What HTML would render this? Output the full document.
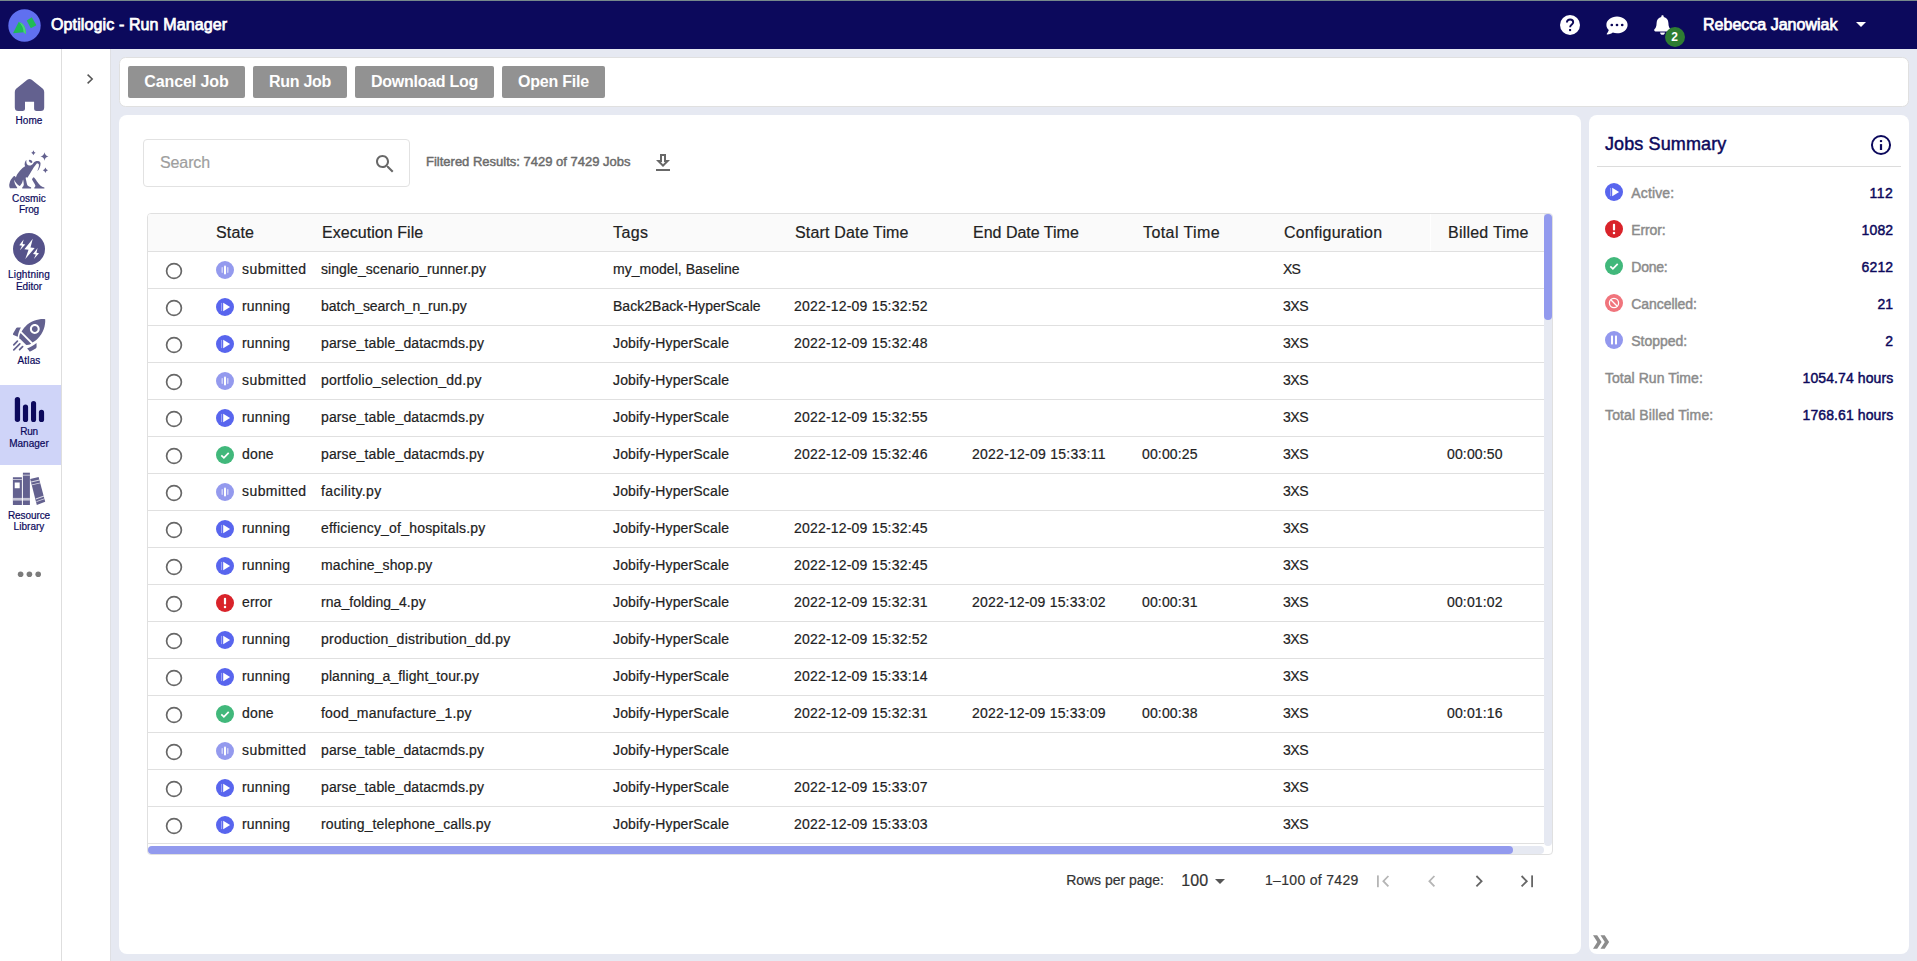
<!DOCTYPE html><html lang='en'><head><meta charset='utf-8'><title>Optilogic - Run Manager</title><style>
*{box-sizing:border-box}
html,body{margin:0;padding:0}
body{width:1917px;height:961px;overflow:hidden;background:#e6e9f2;font-family:"Liberation Sans",Arial,sans-serif;position:relative;color:#222}
.a{position:absolute}
.t{position:absolute;white-space:pre;line-height:1;}
.card{position:absolute;background:#fff;border-radius:8px}
.btn{position:absolute;top:66px;height:32px;background:#929292;border-radius:2px}
.rowline{position:absolute;left:148px;width:1396px;height:1px;background:#e0e0e0}
svg{position:absolute;overflow:visible}
</style></head><body><header><div class='a' style='left:0;top:0;width:1917px;height:48.7px;background:#0c095c'></div><div class='a' style='left:0;top:0;width:1917px;height:1px;background:#76898b'></div><svg style="left:8px;top:8.5px" width="33" height="33" viewBox="0 0 33 33"><circle cx="16.5" cy="16.5" r="16.2" fill="#6070f0"/>
<path d="M5 24.300 L10.800 12.800 Q18.600 15.500 17.800 25.300 L15.600 23.200 Z" fill="#1fbb55"/><path d="M10.800 12.800 Q18.600 15.500 17.800 25.300 L15.600 23.200 Q15.400 17.500 10.800 12.800 Z" fill="#49d37a"/>
<path d="M18.700 11.400 L23.800 8.300 L28.400 16.300 L22.800 19.300 Z" fill="#1fbb55"/></svg><span class='t' style='left:51.00px;top:16.68px;font-size:16px;color:#fff;letter-spacing:0.121px;-webkit-text-stroke:0.75px currentColor;'>Optilogic - Run Manager</span><svg style="left:1560px;top:15px" width="20" height="20" viewBox="0 0 20 20"><circle cx="10" cy="10" r="10" fill="#fff"/>
<path d="M6.9 7.6 C6.9 5.6 8.3 4.5 10.1 4.5 C11.9 4.5 13.2 5.6 13.2 7.2 C13.2 9.4 10.1 9.6 10.1 12.3" fill="none" stroke="#0c0858" stroke-width="1.9" stroke-linecap="butt"/><rect x="9.1" y="14" width="2" height="2.1" fill="#0c0858"/></svg><svg style="left:1605.5px;top:15.5px" width="22" height="20" viewBox="0 0 22 20"><path d="M11 0.6 C5.1 0.6 0.4 4.3 0.4 8.9 C0.4 10.9 1.3 12.7 2.8 14.1 C2.3 16 0.9 17.7 0.8 17.8 C0.7 17.9 0.7 18.1 0.8 18.2 C0.8 18.4 1 18.5 1.2 18.5 C3.8 18.5 5.8 17.3 6.8 16.5 C8.1 17 9.5 17.2 11 17.2 C16.9 17.2 21.6 13.5 21.6 8.9 C21.6 4.3 16.9 0.6 11 0.6 Z" fill="#fff"/>
<circle cx="5.8" cy="9" r="1.35" fill="#0c0858"/><circle cx="11" cy="9" r="1.35" fill="#0c0858"/><circle cx="16.2" cy="9" r="1.35" fill="#0c0858"/></svg><svg style="left:1653.5px;top:15px" width="17" height="20" viewBox="0 0 17 20"><path d="M8.5 0.2 C7.8 0.2 7.3 0.8 7.3 1.4 L7.3 2.1 C4.6 2.7 2.6 5 2.6 7.9 C2.6 11.6 1.6 13 0.6 14.1 C0.3 14.4 0.2 14.8 0.2 15.1 C0.2 15.8 0.7 16.4 1.4 16.4 L15.6 16.4 C16.3 16.4 16.8 15.8 16.8 15.1 C16.8 14.8 16.7 14.4 16.4 14.1 C15.4 13 14.4 11.6 14.4 7.9 C14.4 5 12.4 2.7 9.7 2.1 L9.7 1.4 C9.7 0.8 9.2 0.2 8.5 0.2 Z M8.5 19.8 C9.8 19.8 10.9 18.7 10.9 17.4 L6.1 17.4 C6.1 18.7 7.2 19.8 8.5 19.8 Z" fill="#fff"/></svg><div class='a' style='left:1665px;top:27px;width:20px;height:20px;border-radius:10px;background:#2e7d32'></div><span class='t' style='left:1671.30px;top:30.66px;font-size:12px;color:#fff;letter-spacing:0.513px;font-weight:700;'>2</span><span class='t' style='left:1703.00px;top:16.68px;font-size:16px;color:#fff;letter-spacing:0.008px;-webkit-text-stroke:0.75px currentColor;'>Rebecca Janowiak</span><svg style="left:1856px;top:22px" width="10" height="5" viewBox="0 0 10 5"><path d="M0 0 L10 0 L5 5 Z" fill="#fff"/></svg></header><nav><div class='a' style='left:0;top:48.7px;width:61px;height:913px;background:#fff'></div><div class='a' style='left:61px;top:48.7px;width:1px;height:913px;background:#dedede'></div><div class='a' style='left:62px;top:48.7px;width:48px;height:913px;background:#fff'></div><div class='a' style='left:110px;top:48.7px;width:1px;height:913px;background:#dfe0e4'></div><div class='a' style='left:0;top:385px;width:61px;height:79.7px;background:#cfd4f8'></div><svg style="left:86px;top:73px" width="8" height="12" viewBox="0 0 8 12"><path d="M1.6 1.6 L6.2 6 L1.6 10.4" fill="none" stroke="#555" stroke-width="1.5"/></svg><svg style="left:14px;top:78px" width="31" height="34" viewBox="0 0 31 34"><path d="M13.3 1.8 Q15.5 0.1 17.7 1.8 L28.6 10.6 Q30.2 11.9 30.2 14 L30.2 29.5 Q30.2 33 26.7 33 L22.6 33 Q20.1 33 20.1 30.5 L20.1 23.8 L11 23.8 L11 30.5 Q11 33 8.5 33 L4.3 33 Q0.8 33 0.8 29.5 L0.8 14 Q0.8 11.9 2.4 10.6 Z" fill="#63618f"/></svg><span class='t' style='left:15.58px;top:116.45px;font-size:10px;color:#0c095c;letter-spacing:0.039px;-webkit-text-stroke:0.2px currentColor;'>Home</span><svg style="left:0px;top:140px" width="60" height="60" viewBox="0 0 60 60"><g fill="#63618f">
<path d="M10 48.3 C9 46.5 9.1 44.5 9.5 43.5 C10 41 11.5 38.5 12.8 37.3 C13.5 36.5 14 36 14.5 36 C15 36.1 15.5 36.7 15.9 37.4 C16.5 35.8 17 34.8 17.4 34.1 C18.2 32.6 19.2 31.4 20.1 30.4 C21.6 28.8 23.4 27.4 25.1 26.3 C24.6 25.4 24.5 24.4 24.7 23.6 C24.8 22.6 25 21.9 25.4 21.3 C25.7 20.8 26 20.4 26.5 20 C26.2 21.5 26.3 23 27 24.2 C27.8 25.3 29.2 25.7 30.6 25.5 C31.8 25.3 32.8 24.4 33.4 23.1 C34 22.3 34.6 21.8 35.2 21.5 C36.1 21.1 37.1 21 38 21.05 C38.8 21.1 39.6 21.4 40 22 C40.5 22.6 40.7 23.3 40.5 24 C40.5 25.2 40.2 26.3 39.8 27.2 C39.4 28.3 38.9 29.3 38.4 30 C38.1 30.5 37.7 30.8 37.3 30.9 C38 29.4 38.7 27.8 38.9 26.3 C39 25.4 38.9 24.6 38.7 24 C38.2 23.5 37.6 23.3 37 23.3 C35.4 25 33.8 27.3 32.5 29.5 C31.2 31.6 29.8 33.8 28.8 35.5 C28.3 36.4 27.8 37.2 27.4 37.8 L26.5 37.3 L25.6 37.8 C25.8 39 26 40 26.3 41 C26.6 42.6 26.9 44.2 27.4 45.3 C28.4 46.4 29.8 46.9 31.1 47.3 L31.1 48.4 L22.2 48.4 L22.2 47.5 C23.1 46.8 23.7 45.8 23.8 44.6 C23.7 43 23.4 41.2 23.1 39.6 C22.8 40.6 22.6 41.3 22.4 41.9 C22 43 21.5 43.9 21 44.6 C20.6 45.3 20.3 45.7 19.9 45.9 C19.1 45.800 18.4 45.300 17.800 44.7 C17.1 44.1 16.500 43.4 16 42.8 C15.4 42 14.800 40.9 14.2 39.7 C14.2 41.3 14.700 43.100 15.300 44.6 C15.800 45.8 16.400 46.8 17.200 47.4 L17.200 48.3 Z"/>
<path d="M33.4 37.3 C32.8 38 32.3 38.8 32 39.6 C33 41.2 34 42.8 34.8 44.2 C35.2 44.9 35.4 45.4 35.4 46 C35.2 46.7 34.8 47.2 34.3 47.6 L34.3 48.4 L44.4 48.4 L44.4 47.4 C42.8 47.1 41.4 46.5 40.3 45.5 C39 44.2 38 42.8 37 41.4 C36 40 35 38.7 34.3 37.8 C34 37.5 33.7 37.3 33.4 37.3 Z"/>
<ellipse cx="30.6" cy="21.3" rx="2.05" ry="1.2" transform="rotate(38 30.6 21.3)"/>
<path d="M33.4 10.3 Q33.84 12.30 35.6 12.8 Q33.84 13.30 33.4 15.3 Q32.96 13.30 31.2 12.8 Q32.96 12.30 33.4 10.3 Z"/>
<path d="M44.5 12.3 Q45.06 15.91 48.5 16.5 Q45.06 17.09 44.5 20.7 Q43.94 17.09 40.5 16.5 Q43.94 15.91 44.5 12.3 Z"/>
<path d="M45.4 27.6 Q45.92 29.76 48.0 30.3 Q45.92 30.84 45.4 33.0 Q44.88 30.84 42.8 30.3 Q44.88 29.76 45.4 27.6 Z"/>
</g></svg><span class='t' style='left:12.09px;top:194.35px;font-size:10px;color:#0c095c;letter-spacing:0.081px;-webkit-text-stroke:0.2px currentColor;'>Cosmic</span><span class='t' style='left:18.93px;top:205.35px;font-size:10px;color:#0c095c;letter-spacing:-0.105px;-webkit-text-stroke:0.2px currentColor;'>Frog</span><svg style="left:13px;top:233px" width="32" height="32" viewBox="0 0 32 32"><circle cx="16" cy="16" r="16" fill="#55528a"/>
<g fill="#fff"><path d="M19.8 5.8 L11.4 16.3 L15.5 16.8 L12.3 26 L21.7 15 L17.5 14.5 Z"/>
<path d="M10.6 6.4 L6.3 12.3 L9 12.7 L6.9 17.3 L12.3 11.5 L9.6 11.1 Z"/>
<path d="M24.6 15 L20 21 L22.8 21.4 L20.9 25.9 L26 20.2 L23.5 19.8 Z"/></g></svg><span class='t' style='left:8.07px;top:270.35px;font-size:10px;color:#0c095c;letter-spacing:0.141px;-webkit-text-stroke:0.2px currentColor;'>Lightning</span><span class='t' style='left:15.91px;top:281.75px;font-size:10px;color:#0c095c;letter-spacing:0.008px;-webkit-text-stroke:0.2px currentColor;'>Editor</span><svg style="left:0px;top:305px" width="60" height="50" viewBox="0 0 60 50"><g fill="#63618f">
<path d="M45.2 14.2 C39.4 13.6 31 15.6 25.4 21.4 C23.6 23.2 22.4 25 21.6 26.4 L32.6 37.6 C34 36.8 35.8 35.6 37.6 33.8 C43.4 28 45.6 20.4 45.2 14.2 Z M34.8 19.1 C37.500 19.1 39.700 21.300 39.700 24 C39.700 26.700 37.500 28.900 34.8 28.900 C32.100 28.900 29.900 26.700 29.900 24 C29.900 21.300 32.100 19.1 34.8 19.1 Z M34.8 21.100 C33.200 21.100 31.900 22.400 31.900 24 C31.900 25.600 33.200 26.900 34.8 26.900 C36.400 26.900 37.700 25.600 37.700 24 C37.700 22.400 36.400 21.100 34.8 21.100 Z" fill-rule="evenodd"/>
<path d="M20.6 28 C19.2 30 19 32.2 19.4 33.2 L26 39.8 C27 40.2 29.2 40 31.2 38.8 Z"/>
<path d="M16.300 23.100 Q16.700 22.600 17.400 22.600 L20.900 22.500 C19.400 25 18.200 28.500 17.700 31.800 L13.500 29.900 Q12.600 29.400 13.100 28.400 Z"/>
<path d="M36.500 37.900 L36.600 41.800 C36.600 42.500 36.300 43.100 35.700 43.500 L30.800 46.300 C29.900 46.700 29.100 46.200 28.900 45.400 L27.100 43.400 C30 42.400 33.600 40.300 36.500 37.900 Z"/>
</g><g stroke="#63618f" stroke-width="1.7" stroke-linecap="round"><path d="M17.4 36.2 L13.8 39.8"/><path d="M19.8 38.8 L13.8 44.8"/><path d="M22.6 41.6 L19.6 44.6"/></g></svg><span class='t' style='left:17.52px;top:356.35px;font-size:10px;color:#0c095c;letter-spacing:0.147px;-webkit-text-stroke:0.2px currentColor;'>Atlas</span><svg style="left:0px;top:385px" width="60" height="40" viewBox="0 0 60 40"><g fill="#0c095c">
<rect x="14.8" y="11.9" width="5.3" height="25.1" rx="2.65"/><rect x="22.9" y="19.5" width="5.2" height="17.5" rx="2.6"/><rect x="31" y="15.9" width="5.1" height="21.1" rx="2.55"/><rect x="38.9" y="24.8" width="5.2" height="12.2" rx="2.6"/></g></svg><span class='t' style='left:20.29px;top:427.35px;font-size:10px;color:#0c095c;letter-spacing:-0.312px;-webkit-text-stroke:0.2px currentColor;'>Run</span><span class='t' style='left:9.17px;top:438.75px;font-size:10px;color:#0c095c;letter-spacing:0.027px;-webkit-text-stroke:0.2px currentColor;'>Manager</span><svg style="left:0px;top:465px" width="60" height="45" viewBox="0 0 60 45"><g fill="#63618f">
<path d="M12.9 12.2 H21.9 V40 H12.9 Z M14.7 17.5 H19.7 V23.2 H14.7 Z" fill-rule="evenodd"/>
<rect x="22.9" y="7.7" width="7" height="32.3"/>
<path d="M30.2 14 L38.6 12 L45.2 36.8 L36.8 40 Z"/></g>
<g fill="#fff" opacity="0.75"><rect x="12.9" y="32.9" width="17" height="2.7" opacity="0.85"/><rect x="22.9" y="9.7" width="7" height="0.9"/><rect x="12.9" y="14" width="9" height="0.8"/>
<path d="M31 16.6 L39.4 14.6 L39.7 15.6 L31.3 17.6 Z"/><path d="M31.8 19.4 L40.2 17.4 L40.4 18.2 L32 20.2 Z"/><path d="M35.6 33.6 L44 30.6 L44.3 31.6 L35.9 34.6 Z"/><path d="M36.3 36.2 L44.7 33.2 L44.9 34 L36.5 37 Z"/></g></svg><span class='t' style='left:7.97px;top:510.55px;font-size:10px;color:#0c095c;letter-spacing:-0.094px;-webkit-text-stroke:0.2px currentColor;'>Resource</span><span class='t' style='left:13.58px;top:521.95px;font-size:10px;color:#0c095c;letter-spacing:0.038px;-webkit-text-stroke:0.2px currentColor;'>Library</span><svg style="left:0px;top:565px" width="60" height="20" viewBox="0 0 60 20"><g fill="#7b7b7b"><circle cx="20.6" cy="9.3" r="2.8"/><circle cx="29.4" cy="9.3" r="2.8"/><circle cx="38.2" cy="9.3" r="2.8"/></g></svg></nav><main><div class='card' style='left:119px;top:57px;width:1790px;height:50px;border:1px solid #e0e0e0;border-radius:6.5px'></div><div class='btn' style='left:128px;width:117px'></div><span class='t' style='left:144.34px;top:74.28px;font-size:16px;color:#fff;letter-spacing:-0.104px;font-weight:700;'>Cancel Job</span><div class='btn' style='left:253px;width:94px'></div><span class='t' style='left:269.05px;top:74.28px;font-size:16px;color:#fff;letter-spacing:-0.301px;font-weight:700;'>Run Job</span><div class='btn' style='left:355px;width:139px'></div><span class='t' style='left:370.92px;top:74.28px;font-size:16px;color:#fff;letter-spacing:-0.254px;font-weight:700;'>Download Log</span><div class='btn' style='left:502px;width:103px'></div><span class='t' style='left:518.01px;top:74.28px;font-size:16px;color:#fff;letter-spacing:-0.215px;font-weight:700;'>Open File</span><div class='card' style='left:118.8px;top:114.7px;width:1462.2px;height:839.1px'></div><div class='a' style='left:143px;top:139.2px;width:267px;height:47.4px;border:1px solid #e2e2e2;border-radius:4px;background:#fff'></div><span class='t' style='left:160.00px;top:154.58px;font-size:16px;color:#9e9e9e;letter-spacing:-0.108px;-webkit-text-stroke:0.2px currentColor;'>Search</span><svg style="left:373px;top:151.700px" width="24" height="24" viewBox="0 0 24 24"><path d="M15.5 14h-.79l-.28-.27C15.41 12.59 16 11.11 16 9.5 16 5.91 13.09 3 9.5 3S3 5.91 3 9.5 5.91 16 9.5 16c1.610 0 3.090-.59 4.230-1.570l.27.28v.79l5 4.990L20.490 19l-4.990-5zm-6 0C7.010 14 5 11.990 5 9.500S7.010 5 9.500 5 14 7.010 14 9.500 11.990 14 9.500 14z" fill="#686868"/></svg><span class='t' style='left:426.00px;top:154.91px;font-size:13px;color:#6b6b6b;letter-spacing:-0.000px;-webkit-text-stroke:0.45px currentColor;'>Filtered Results: 7429 of 7429 Jobs</span><svg style="left:650.900px;top:150.900px" width="24" height="24" viewBox="0 0 24 24"><path d="M19 9h-4V3H9v6H5l7 7 7-7z M11 5h2v6h1.170L12 13.170 9.830 11H11V5z M5 18v2h14v-2H5z" fill="#686868" fill-rule="evenodd"/></svg><div class='a' style='left:147px;top:213px;width:1406px;height:642px;border:1px solid #e0e0e0;border-radius:4px;background:#fff'></div><div class='a' style='left:148px;top:214px;width:1396px;height:37px;background:#fafafa;border-top-left-radius:3px'></div><div class='a' style='left:1430px;top:214px;width:1px;height:38px;background:#fff'></div><div class='rowline' style='top:251px'></div><span class='t' style='left:216.00px;top:224.78px;font-size:16px;color:#222;letter-spacing:0.139px;-webkit-text-stroke:0.2px currentColor;'>State</span><span class='t' style='left:322.00px;top:224.78px;font-size:16px;color:#222;letter-spacing:0.053px;-webkit-text-stroke:0.2px currentColor;'>Execution File</span><span class='t' style='left:613.00px;top:224.78px;font-size:16px;color:#222;letter-spacing:0.383px;-webkit-text-stroke:0.2px currentColor;'>Tags</span><span class='t' style='left:795.00px;top:224.78px;font-size:16px;color:#222;letter-spacing:0.169px;-webkit-text-stroke:0.2px currentColor;'>Start Date Time</span><span class='t' style='left:973.00px;top:224.78px;font-size:16px;color:#222;letter-spacing:-0.003px;-webkit-text-stroke:0.2px currentColor;'>End Date Time</span><span class='t' style='left:1143.00px;top:224.78px;font-size:16px;color:#222;letter-spacing:0.422px;-webkit-text-stroke:0.2px currentColor;'>Total Time</span><span class='t' style='left:1284.00px;top:224.78px;font-size:16px;color:#222;letter-spacing:0.240px;-webkit-text-stroke:0.2px currentColor;'>Configuration</span><span class='t' style='left:1448.00px;top:224.78px;font-size:16px;color:#222;letter-spacing:0.227px;-webkit-text-stroke:0.2px currentColor;'>Billed Time</span><div class='rowline' style='top:288px'></div><svg style="left:165px;top:261.7px" width="18" height="18" viewBox="0 0 18 18"><circle cx="9" cy="9" r="7.400" fill="none" stroke="#676767" stroke-width="1.700"/></svg><svg style="left:216px;top:261px" width="18" height="18" viewBox="0 0 18 18"><circle cx="9" cy="9" r="9" fill="#949aee"/><rect x="8" y="4.6" width="2" height="8.8" rx="1" fill="#fff"/><rect x="5.5" y="6" width="1.4" height="6" rx="0.7" fill="#fff" opacity="0.6"/><rect x="11.1" y="6" width="1.4" height="6" rx="0.7" fill="#fff" opacity="0.6"/></svg><span class='t' style='left:242.00px;top:261.87px;font-size:14px;color:#222;letter-spacing:0.432px;-webkit-text-stroke:0.2px currentColor;'>submitted</span><span class='t' style='left:321.00px;top:261.87px;font-size:14px;color:#222;letter-spacing:0.062px;-webkit-text-stroke:0.2px currentColor;'>single_scenario_runner.py</span><span class='t' style='left:613.00px;top:261.87px;font-size:14px;color:#222;letter-spacing:0.032px;-webkit-text-stroke:0.2px currentColor;'>my_model, Baseline</span><span class='t' style='left:1283.00px;top:261.87px;font-size:14px;color:#222;letter-spacing:-0.844px;-webkit-text-stroke:0.2px currentColor;'>XS</span><div class='rowline' style='top:325px'></div><svg style="left:165px;top:298.7px" width="18" height="18" viewBox="0 0 18 18"><circle cx="9" cy="9" r="7.400" fill="none" stroke="#676767" stroke-width="1.700"/></svg><svg style="left:216px;top:298px" width="18" height="18" viewBox="0 0 18 18"><circle cx="9" cy="9" r="9" fill="#5865ee"/><path d="M7.2 4.8 L14.1 9 L7.2 13.2 Z" fill="#fff"/><rect x="5.1" y="4.9" width="1" height="8.2" fill="#fff" opacity="0.45"/></svg><span class='t' style='left:242.00px;top:298.87px;font-size:14px;color:#222;letter-spacing:0.211px;-webkit-text-stroke:0.2px currentColor;'>running</span><span class='t' style='left:321.00px;top:298.87px;font-size:14px;color:#222;letter-spacing:-0.026px;-webkit-text-stroke:0.2px currentColor;'>batch_search_n_run.py</span><span class='t' style='left:613.00px;top:298.87px;font-size:14px;color:#222;letter-spacing:0.027px;-webkit-text-stroke:0.2px currentColor;'>Back2Back-HyperScale</span><span class='t' style='left:794.00px;top:298.87px;font-size:14px;color:#222;letter-spacing:0.195px;-webkit-text-stroke:0.2px currentColor;'>2022-12-09 15:32:52</span><span class='t' style='left:1283.00px;top:298.87px;font-size:14px;color:#222;letter-spacing:-0.490px;-webkit-text-stroke:0.2px currentColor;'>3XS</span><div class='rowline' style='top:362px'></div><svg style="left:165px;top:335.7px" width="18" height="18" viewBox="0 0 18 18"><circle cx="9" cy="9" r="7.400" fill="none" stroke="#676767" stroke-width="1.700"/></svg><svg style="left:216px;top:335px" width="18" height="18" viewBox="0 0 18 18"><circle cx="9" cy="9" r="9" fill="#5865ee"/><path d="M7.2 4.8 L14.1 9 L7.2 13.2 Z" fill="#fff"/><rect x="5.1" y="4.9" width="1" height="8.2" fill="#fff" opacity="0.45"/></svg><span class='t' style='left:242.00px;top:335.87px;font-size:14px;color:#222;letter-spacing:0.211px;-webkit-text-stroke:0.2px currentColor;'>running</span><span class='t' style='left:321.00px;top:335.87px;font-size:14px;color:#222;letter-spacing:0.119px;-webkit-text-stroke:0.2px currentColor;'>parse_table_datacmds.py</span><span class='t' style='left:613.00px;top:335.87px;font-size:14px;color:#222;letter-spacing:0.148px;-webkit-text-stroke:0.2px currentColor;'>Jobify-HyperScale</span><span class='t' style='left:794.00px;top:335.87px;font-size:14px;color:#222;letter-spacing:0.195px;-webkit-text-stroke:0.2px currentColor;'>2022-12-09 15:32:48</span><span class='t' style='left:1283.00px;top:335.87px;font-size:14px;color:#222;letter-spacing:-0.490px;-webkit-text-stroke:0.2px currentColor;'>3XS</span><div class='rowline' style='top:399px'></div><svg style="left:165px;top:372.7px" width="18" height="18" viewBox="0 0 18 18"><circle cx="9" cy="9" r="7.400" fill="none" stroke="#676767" stroke-width="1.700"/></svg><svg style="left:216px;top:372px" width="18" height="18" viewBox="0 0 18 18"><circle cx="9" cy="9" r="9" fill="#949aee"/><rect x="8" y="4.6" width="2" height="8.8" rx="1" fill="#fff"/><rect x="5.5" y="6" width="1.4" height="6" rx="0.7" fill="#fff" opacity="0.6"/><rect x="11.1" y="6" width="1.4" height="6" rx="0.7" fill="#fff" opacity="0.6"/></svg><span class='t' style='left:242.00px;top:372.87px;font-size:14px;color:#222;letter-spacing:0.432px;-webkit-text-stroke:0.2px currentColor;'>submitted</span><span class='t' style='left:321.00px;top:372.87px;font-size:14px;color:#222;letter-spacing:0.232px;-webkit-text-stroke:0.2px currentColor;'>portfolio_selection_dd.py</span><span class='t' style='left:613.00px;top:372.87px;font-size:14px;color:#222;letter-spacing:0.148px;-webkit-text-stroke:0.2px currentColor;'>Jobify-HyperScale</span><span class='t' style='left:1283.00px;top:372.87px;font-size:14px;color:#222;letter-spacing:-0.490px;-webkit-text-stroke:0.2px currentColor;'>3XS</span><div class='rowline' style='top:436px'></div><svg style="left:165px;top:409.7px" width="18" height="18" viewBox="0 0 18 18"><circle cx="9" cy="9" r="7.400" fill="none" stroke="#676767" stroke-width="1.700"/></svg><svg style="left:216px;top:409px" width="18" height="18" viewBox="0 0 18 18"><circle cx="9" cy="9" r="9" fill="#5865ee"/><path d="M7.2 4.8 L14.1 9 L7.2 13.2 Z" fill="#fff"/><rect x="5.1" y="4.9" width="1" height="8.2" fill="#fff" opacity="0.45"/></svg><span class='t' style='left:242.00px;top:409.87px;font-size:14px;color:#222;letter-spacing:0.211px;-webkit-text-stroke:0.2px currentColor;'>running</span><span class='t' style='left:321.00px;top:409.87px;font-size:14px;color:#222;letter-spacing:0.119px;-webkit-text-stroke:0.2px currentColor;'>parse_table_datacmds.py</span><span class='t' style='left:613.00px;top:409.87px;font-size:14px;color:#222;letter-spacing:0.148px;-webkit-text-stroke:0.2px currentColor;'>Jobify-HyperScale</span><span class='t' style='left:794.00px;top:409.87px;font-size:14px;color:#222;letter-spacing:0.195px;-webkit-text-stroke:0.2px currentColor;'>2022-12-09 15:32:55</span><span class='t' style='left:1283.00px;top:409.87px;font-size:14px;color:#222;letter-spacing:-0.490px;-webkit-text-stroke:0.2px currentColor;'>3XS</span><div class='rowline' style='top:473px'></div><svg style="left:165px;top:446.7px" width="18" height="18" viewBox="0 0 18 18"><circle cx="9" cy="9" r="7.400" fill="none" stroke="#676767" stroke-width="1.700"/></svg><svg style="left:216px;top:446px" width="18" height="18" viewBox="0 0 18 18"><circle cx="9" cy="9" r="9" fill="#41b87b"/><path d="M5.3 9.3 L7.9 11.8 L12.7 6.8" fill="none" stroke="#fff" stroke-width="1.7"/></svg><span class='t' style='left:242.00px;top:446.87px;font-size:14px;color:#222;letter-spacing:0.153px;-webkit-text-stroke:0.2px currentColor;'>done</span><span class='t' style='left:321.00px;top:446.87px;font-size:14px;color:#222;letter-spacing:0.119px;-webkit-text-stroke:0.2px currentColor;'>parse_table_datacmds.py</span><span class='t' style='left:613.00px;top:446.87px;font-size:14px;color:#222;letter-spacing:0.148px;-webkit-text-stroke:0.2px currentColor;'>Jobify-HyperScale</span><span class='t' style='left:794.00px;top:446.87px;font-size:14px;color:#222;letter-spacing:0.195px;-webkit-text-stroke:0.2px currentColor;'>2022-12-09 15:32:46</span><span class='t' style='left:972.00px;top:446.87px;font-size:14px;color:#222;letter-spacing:0.249px;-webkit-text-stroke:0.2px currentColor;'>2022-12-09 15:33:11</span><span class='t' style='left:1142.00px;top:446.87px;font-size:14px;color:#222;letter-spacing:0.150px;-webkit-text-stroke:0.2px currentColor;'>00:00:25</span><span class='t' style='left:1283.00px;top:446.87px;font-size:14px;color:#222;letter-spacing:-0.490px;-webkit-text-stroke:0.2px currentColor;'>3XS</span><span class='t' style='left:1447.00px;top:446.87px;font-size:14px;color:#222;letter-spacing:0.150px;-webkit-text-stroke:0.2px currentColor;'>00:00:50</span><div class='rowline' style='top:510px'></div><svg style="left:165px;top:483.7px" width="18" height="18" viewBox="0 0 18 18"><circle cx="9" cy="9" r="7.400" fill="none" stroke="#676767" stroke-width="1.700"/></svg><svg style="left:216px;top:483px" width="18" height="18" viewBox="0 0 18 18"><circle cx="9" cy="9" r="9" fill="#949aee"/><rect x="8" y="4.6" width="2" height="8.8" rx="1" fill="#fff"/><rect x="5.5" y="6" width="1.4" height="6" rx="0.7" fill="#fff" opacity="0.6"/><rect x="11.1" y="6" width="1.4" height="6" rx="0.7" fill="#fff" opacity="0.6"/></svg><span class='t' style='left:242.00px;top:483.87px;font-size:14px;color:#222;letter-spacing:0.432px;-webkit-text-stroke:0.2px currentColor;'>submitted</span><span class='t' style='left:321.00px;top:483.87px;font-size:14px;color:#222;letter-spacing:0.367px;-webkit-text-stroke:0.2px currentColor;'>facility.py</span><span class='t' style='left:613.00px;top:483.87px;font-size:14px;color:#222;letter-spacing:0.148px;-webkit-text-stroke:0.2px currentColor;'>Jobify-HyperScale</span><span class='t' style='left:1283.00px;top:483.87px;font-size:14px;color:#222;letter-spacing:-0.490px;-webkit-text-stroke:0.2px currentColor;'>3XS</span><div class='rowline' style='top:547px'></div><svg style="left:165px;top:520.7px" width="18" height="18" viewBox="0 0 18 18"><circle cx="9" cy="9" r="7.400" fill="none" stroke="#676767" stroke-width="1.700"/></svg><svg style="left:216px;top:520px" width="18" height="18" viewBox="0 0 18 18"><circle cx="9" cy="9" r="9" fill="#5865ee"/><path d="M7.2 4.8 L14.1 9 L7.2 13.2 Z" fill="#fff"/><rect x="5.1" y="4.9" width="1" height="8.2" fill="#fff" opacity="0.45"/></svg><span class='t' style='left:242.00px;top:520.87px;font-size:14px;color:#222;letter-spacing:0.211px;-webkit-text-stroke:0.2px currentColor;'>running</span><span class='t' style='left:321.00px;top:520.87px;font-size:14px;color:#222;letter-spacing:0.200px;-webkit-text-stroke:0.2px currentColor;'>efficiency_of_hospitals.py</span><span class='t' style='left:613.00px;top:520.87px;font-size:14px;color:#222;letter-spacing:0.148px;-webkit-text-stroke:0.2px currentColor;'>Jobify-HyperScale</span><span class='t' style='left:794.00px;top:520.87px;font-size:14px;color:#222;letter-spacing:0.195px;-webkit-text-stroke:0.2px currentColor;'>2022-12-09 15:32:45</span><span class='t' style='left:1283.00px;top:520.87px;font-size:14px;color:#222;letter-spacing:-0.490px;-webkit-text-stroke:0.2px currentColor;'>3XS</span><div class='rowline' style='top:584px'></div><svg style="left:165px;top:557.7px" width="18" height="18" viewBox="0 0 18 18"><circle cx="9" cy="9" r="7.400" fill="none" stroke="#676767" stroke-width="1.700"/></svg><svg style="left:216px;top:557px" width="18" height="18" viewBox="0 0 18 18"><circle cx="9" cy="9" r="9" fill="#5865ee"/><path d="M7.2 4.8 L14.1 9 L7.2 13.2 Z" fill="#fff"/><rect x="5.1" y="4.9" width="1" height="8.2" fill="#fff" opacity="0.45"/></svg><span class='t' style='left:242.00px;top:557.87px;font-size:14px;color:#222;letter-spacing:0.211px;-webkit-text-stroke:0.2px currentColor;'>running</span><span class='t' style='left:321.00px;top:557.87px;font-size:14px;color:#222;letter-spacing:0.110px;-webkit-text-stroke:0.2px currentColor;'>machine_shop.py</span><span class='t' style='left:613.00px;top:557.87px;font-size:14px;color:#222;letter-spacing:0.148px;-webkit-text-stroke:0.2px currentColor;'>Jobify-HyperScale</span><span class='t' style='left:794.00px;top:557.87px;font-size:14px;color:#222;letter-spacing:0.195px;-webkit-text-stroke:0.2px currentColor;'>2022-12-09 15:32:45</span><span class='t' style='left:1283.00px;top:557.87px;font-size:14px;color:#222;letter-spacing:-0.490px;-webkit-text-stroke:0.2px currentColor;'>3XS</span><div class='rowline' style='top:621px'></div><svg style="left:165px;top:594.7px" width="18" height="18" viewBox="0 0 18 18"><circle cx="9" cy="9" r="7.400" fill="none" stroke="#676767" stroke-width="1.700"/></svg><svg style="left:216px;top:594px" width="18" height="18" viewBox="0 0 18 18"><circle cx="9" cy="9" r="9" fill="#d9232a"/><rect x="7.9" y="3.8" width="2.2" height="6.6" rx="1" fill="#fff"/><circle cx="9" cy="13" r="1.25" fill="#fff"/></svg><span class='t' style='left:242.00px;top:594.87px;font-size:14px;color:#222;letter-spacing:0.171px;-webkit-text-stroke:0.2px currentColor;'>error</span><span class='t' style='left:321.00px;top:594.87px;font-size:14px;color:#222;letter-spacing:0.075px;-webkit-text-stroke:0.2px currentColor;'>rna_folding_4.py</span><span class='t' style='left:613.00px;top:594.87px;font-size:14px;color:#222;letter-spacing:0.148px;-webkit-text-stroke:0.2px currentColor;'>Jobify-HyperScale</span><span class='t' style='left:794.00px;top:594.87px;font-size:14px;color:#222;letter-spacing:0.195px;-webkit-text-stroke:0.2px currentColor;'>2022-12-09 15:32:31</span><span class='t' style='left:972.00px;top:594.87px;font-size:14px;color:#222;letter-spacing:0.195px;-webkit-text-stroke:0.2px currentColor;'>2022-12-09 15:33:02</span><span class='t' style='left:1142.00px;top:594.87px;font-size:14px;color:#222;letter-spacing:0.150px;-webkit-text-stroke:0.2px currentColor;'>00:00:31</span><span class='t' style='left:1283.00px;top:594.87px;font-size:14px;color:#222;letter-spacing:-0.490px;-webkit-text-stroke:0.2px currentColor;'>3XS</span><span class='t' style='left:1447.00px;top:594.87px;font-size:14px;color:#222;letter-spacing:0.150px;-webkit-text-stroke:0.2px currentColor;'>00:01:02</span><div class='rowline' style='top:658px'></div><svg style="left:165px;top:631.7px" width="18" height="18" viewBox="0 0 18 18"><circle cx="9" cy="9" r="7.400" fill="none" stroke="#676767" stroke-width="1.700"/></svg><svg style="left:216px;top:631px" width="18" height="18" viewBox="0 0 18 18"><circle cx="9" cy="9" r="9" fill="#5865ee"/><path d="M7.2 4.8 L14.1 9 L7.2 13.2 Z" fill="#fff"/><rect x="5.1" y="4.9" width="1" height="8.2" fill="#fff" opacity="0.45"/></svg><span class='t' style='left:242.00px;top:631.87px;font-size:14px;color:#222;letter-spacing:0.211px;-webkit-text-stroke:0.2px currentColor;'>running</span><span class='t' style='left:321.00px;top:631.87px;font-size:14px;color:#222;letter-spacing:0.223px;-webkit-text-stroke:0.2px currentColor;'>production_distribution_dd.py</span><span class='t' style='left:613.00px;top:631.87px;font-size:14px;color:#222;letter-spacing:0.148px;-webkit-text-stroke:0.2px currentColor;'>Jobify-HyperScale</span><span class='t' style='left:794.00px;top:631.87px;font-size:14px;color:#222;letter-spacing:0.195px;-webkit-text-stroke:0.2px currentColor;'>2022-12-09 15:32:52</span><span class='t' style='left:1283.00px;top:631.87px;font-size:14px;color:#222;letter-spacing:-0.490px;-webkit-text-stroke:0.2px currentColor;'>3XS</span><div class='rowline' style='top:695px'></div><svg style="left:165px;top:668.7px" width="18" height="18" viewBox="0 0 18 18"><circle cx="9" cy="9" r="7.400" fill="none" stroke="#676767" stroke-width="1.700"/></svg><svg style="left:216px;top:668px" width="18" height="18" viewBox="0 0 18 18"><circle cx="9" cy="9" r="9" fill="#5865ee"/><path d="M7.2 4.8 L14.1 9 L7.2 13.2 Z" fill="#fff"/><rect x="5.1" y="4.9" width="1" height="8.2" fill="#fff" opacity="0.45"/></svg><span class='t' style='left:242.00px;top:668.87px;font-size:14px;color:#222;letter-spacing:0.211px;-webkit-text-stroke:0.2px currentColor;'>running</span><span class='t' style='left:321.00px;top:668.87px;font-size:14px;color:#222;letter-spacing:0.095px;-webkit-text-stroke:0.2px currentColor;'>planning_a_flight_tour.py</span><span class='t' style='left:613.00px;top:668.87px;font-size:14px;color:#222;letter-spacing:0.148px;-webkit-text-stroke:0.2px currentColor;'>Jobify-HyperScale</span><span class='t' style='left:794.00px;top:668.87px;font-size:14px;color:#222;letter-spacing:0.195px;-webkit-text-stroke:0.2px currentColor;'>2022-12-09 15:33:14</span><span class='t' style='left:1283.00px;top:668.87px;font-size:14px;color:#222;letter-spacing:-0.490px;-webkit-text-stroke:0.2px currentColor;'>3XS</span><div class='rowline' style='top:732px'></div><svg style="left:165px;top:705.7px" width="18" height="18" viewBox="0 0 18 18"><circle cx="9" cy="9" r="7.400" fill="none" stroke="#676767" stroke-width="1.700"/></svg><svg style="left:216px;top:705px" width="18" height="18" viewBox="0 0 18 18"><circle cx="9" cy="9" r="9" fill="#41b87b"/><path d="M5.3 9.3 L7.9 11.8 L12.7 6.8" fill="none" stroke="#fff" stroke-width="1.7"/></svg><span class='t' style='left:242.00px;top:705.87px;font-size:14px;color:#222;letter-spacing:0.153px;-webkit-text-stroke:0.2px currentColor;'>done</span><span class='t' style='left:321.00px;top:705.87px;font-size:14px;color:#222;letter-spacing:0.167px;-webkit-text-stroke:0.2px currentColor;'>food_manufacture_1.py</span><span class='t' style='left:613.00px;top:705.87px;font-size:14px;color:#222;letter-spacing:0.148px;-webkit-text-stroke:0.2px currentColor;'>Jobify-HyperScale</span><span class='t' style='left:794.00px;top:705.87px;font-size:14px;color:#222;letter-spacing:0.195px;-webkit-text-stroke:0.2px currentColor;'>2022-12-09 15:32:31</span><span class='t' style='left:972.00px;top:705.87px;font-size:14px;color:#222;letter-spacing:0.195px;-webkit-text-stroke:0.2px currentColor;'>2022-12-09 15:33:09</span><span class='t' style='left:1142.00px;top:705.87px;font-size:14px;color:#222;letter-spacing:0.150px;-webkit-text-stroke:0.2px currentColor;'>00:00:38</span><span class='t' style='left:1283.00px;top:705.87px;font-size:14px;color:#222;letter-spacing:-0.490px;-webkit-text-stroke:0.2px currentColor;'>3XS</span><span class='t' style='left:1447.00px;top:705.87px;font-size:14px;color:#222;letter-spacing:0.150px;-webkit-text-stroke:0.2px currentColor;'>00:01:16</span><div class='rowline' style='top:769px'></div><svg style="left:165px;top:742.7px" width="18" height="18" viewBox="0 0 18 18"><circle cx="9" cy="9" r="7.400" fill="none" stroke="#676767" stroke-width="1.700"/></svg><svg style="left:216px;top:742px" width="18" height="18" viewBox="0 0 18 18"><circle cx="9" cy="9" r="9" fill="#949aee"/><rect x="8" y="4.6" width="2" height="8.8" rx="1" fill="#fff"/><rect x="5.5" y="6" width="1.4" height="6" rx="0.7" fill="#fff" opacity="0.6"/><rect x="11.1" y="6" width="1.4" height="6" rx="0.7" fill="#fff" opacity="0.6"/></svg><span class='t' style='left:242.00px;top:742.87px;font-size:14px;color:#222;letter-spacing:0.432px;-webkit-text-stroke:0.2px currentColor;'>submitted</span><span class='t' style='left:321.00px;top:742.87px;font-size:14px;color:#222;letter-spacing:0.119px;-webkit-text-stroke:0.2px currentColor;'>parse_table_datacmds.py</span><span class='t' style='left:613.00px;top:742.87px;font-size:14px;color:#222;letter-spacing:0.148px;-webkit-text-stroke:0.2px currentColor;'>Jobify-HyperScale</span><span class='t' style='left:1283.00px;top:742.87px;font-size:14px;color:#222;letter-spacing:-0.490px;-webkit-text-stroke:0.2px currentColor;'>3XS</span><div class='rowline' style='top:806px'></div><svg style="left:165px;top:779.7px" width="18" height="18" viewBox="0 0 18 18"><circle cx="9" cy="9" r="7.400" fill="none" stroke="#676767" stroke-width="1.700"/></svg><svg style="left:216px;top:779px" width="18" height="18" viewBox="0 0 18 18"><circle cx="9" cy="9" r="9" fill="#5865ee"/><path d="M7.2 4.8 L14.1 9 L7.2 13.2 Z" fill="#fff"/><rect x="5.1" y="4.9" width="1" height="8.2" fill="#fff" opacity="0.45"/></svg><span class='t' style='left:242.00px;top:779.87px;font-size:14px;color:#222;letter-spacing:0.211px;-webkit-text-stroke:0.2px currentColor;'>running</span><span class='t' style='left:321.00px;top:779.87px;font-size:14px;color:#222;letter-spacing:0.119px;-webkit-text-stroke:0.2px currentColor;'>parse_table_datacmds.py</span><span class='t' style='left:613.00px;top:779.87px;font-size:14px;color:#222;letter-spacing:0.148px;-webkit-text-stroke:0.2px currentColor;'>Jobify-HyperScale</span><span class='t' style='left:794.00px;top:779.87px;font-size:14px;color:#222;letter-spacing:0.195px;-webkit-text-stroke:0.2px currentColor;'>2022-12-09 15:33:07</span><span class='t' style='left:1283.00px;top:779.87px;font-size:14px;color:#222;letter-spacing:-0.490px;-webkit-text-stroke:0.2px currentColor;'>3XS</span><div class='rowline' style='top:843px'></div><svg style="left:165px;top:816.7px" width="18" height="18" viewBox="0 0 18 18"><circle cx="9" cy="9" r="7.400" fill="none" stroke="#676767" stroke-width="1.700"/></svg><svg style="left:216px;top:816px" width="18" height="18" viewBox="0 0 18 18"><circle cx="9" cy="9" r="9" fill="#5865ee"/><path d="M7.2 4.8 L14.1 9 L7.2 13.2 Z" fill="#fff"/><rect x="5.1" y="4.9" width="1" height="8.2" fill="#fff" opacity="0.45"/></svg><span class='t' style='left:242.00px;top:816.87px;font-size:14px;color:#222;letter-spacing:0.211px;-webkit-text-stroke:0.2px currentColor;'>running</span><span class='t' style='left:321.00px;top:816.87px;font-size:14px;color:#222;letter-spacing:0.125px;-webkit-text-stroke:0.2px currentColor;'>routing_telephone_calls.py</span><span class='t' style='left:613.00px;top:816.87px;font-size:14px;color:#222;letter-spacing:0.148px;-webkit-text-stroke:0.2px currentColor;'>Jobify-HyperScale</span><span class='t' style='left:794.00px;top:816.87px;font-size:14px;color:#222;letter-spacing:0.195px;-webkit-text-stroke:0.2px currentColor;'>2022-12-09 15:33:03</span><span class='t' style='left:1283.00px;top:816.87px;font-size:14px;color:#222;letter-spacing:-0.490px;-webkit-text-stroke:0.2px currentColor;'>3XS</span><div class='a' style='left:1544px;top:214px;width:8px;height:632px;background:#e6e9f2;border-radius:0 0 4px 4px'></div><div class='a' style='left:1544px;top:213.5px;width:8px;height:106.6px;background:#929aee;border-radius:4px'></div><div class='a' style='left:148px;top:846px;width:1396px;height:8px;background:#e6e9f2;border-radius:4px'></div><div class='a' style='left:148px;top:846px;width:1365px;height:8px;background:#929aee;border-radius:4px'></div><span class='t' style='left:1066.20px;top:872.87px;font-size:14px;color:#333;letter-spacing:-0.033px;-webkit-text-stroke:0.2px currentColor;'>Rows per page:</span><span class='t' style='left:1181.30px;top:872.58px;font-size:16px;color:#333;letter-spacing:0.099px;-webkit-text-stroke:0.2px currentColor;'>100</span><svg style="left:1215.2px;top:879px" width="10" height="5" viewBox="0 0 10 5"><path d="M0 0 L10 0 L5 5 Z" fill="#555"/></svg><span class='t' style='left:1265.00px;top:872.87px;font-size:14px;color:#333;letter-spacing:0.313px;-webkit-text-stroke:0.2px currentColor;'>1–100 of 7429</span><svg style="left:1376.100px;top:875px" width="14" height="13" viewBox="0 0 14 13"><path d="M12.4 1 L7.4 6.2 L12.4 11.4" fill="none" stroke="#b5b5b5" stroke-width="1.8"/><rect x="1" y="0.4" width="1.8" height="11.8" fill="#b5b5b5"/></svg><svg style="left:1426px;top:875px" width="14" height="13" viewBox="0 0 14 13"><path d="M8.4 1 L3.4 6.2 L8.4 11.4" fill="none" stroke="#b5b5b5" stroke-width="1.8"/></svg><svg style="left:1474px;top:875px" width="14" height="13" viewBox="0 0 14 13"><path d="M2.4 1 L7.6 6.2 L2.4 11.4" fill="none" stroke="#666" stroke-width="1.8"/></svg><svg style="left:1520px;top:875px" width="14" height="13" viewBox="0 0 14 13"><path d="M1.6 1 L6.8 6.2 L1.6 11.4" fill="none" stroke="#666" stroke-width="1.8"/><rect x="11.2" y="0.4" width="1.8" height="11.8" fill="#666"/></svg></main><aside><div class='card' style='left:1588.8px;top:114.7px;width:320.4px;height:839.1px'></div><span class='t' style='left:1605.00px;top:135.19px;font-size:18px;color:#0c095c;letter-spacing:0.112px;-webkit-text-stroke:0.45px currentColor;'>Jobs Summary</span><svg style="left:1871px;top:134.850px" width="20" height="20" viewBox="0 0 20 20"><circle cx="10" cy="10" r="9.050" fill="none" stroke="#0c095c" stroke-width="2"/><rect x="8.900" y="9.100" width="2.200" height="5.900" fill="#0c095c"/><rect x="8.900" y="5.100" width="2.200" height="2" fill="#0c095c"/></svg><div class='a' style='left:1597px;top:165.6px;width:304px;height:1px;background:#dcdcdc'></div><svg style="left:1605px;top:183px" width="18" height="18" viewBox="0 0 18 18"><circle cx="9" cy="9" r="9" fill="#5865ee"/><path d="M7.2 4.8 L14.1 9 L7.2 13.2 Z" fill="#fff"/><rect x="5.1" y="4.9" width="1" height="8.2" fill="#fff" opacity="0.45"/></svg><span class='t' style='left:1631.30px;top:186.17px;font-size:14px;color:#8b8b8b;letter-spacing:0.123px;-webkit-text-stroke:0.45px currentColor;'>Active:</span><span class='t' style='left:1869.42px;top:186.17px;font-size:14px;color:#0c095c;letter-spacing:0.516px;-webkit-text-stroke:0.45px currentColor;'>112</span><svg style="left:1605px;top:220px" width="18" height="18" viewBox="0 0 18 18"><circle cx="9" cy="9" r="9" fill="#d9232a"/><rect x="7.9" y="3.8" width="2.2" height="6.6" rx="1" fill="#fff"/><circle cx="9" cy="13" r="1.25" fill="#fff"/></svg><span class='t' style='left:1631.30px;top:223.17px;font-size:14px;color:#8b8b8b;letter-spacing:-0.130px;-webkit-text-stroke:0.45px currentColor;'>Error:</span><span class='t' style='left:1861.47px;top:223.17px;font-size:14px;color:#0c095c;letter-spacing:0.168px;-webkit-text-stroke:0.45px currentColor;'>1082</span><svg style="left:1605px;top:257px" width="18" height="18" viewBox="0 0 18 18"><circle cx="9" cy="9" r="9" fill="#41b87b"/><path d="M5.3 9.3 L7.9 11.8 L12.7 6.8" fill="none" stroke="#fff" stroke-width="1.7"/></svg><span class='t' style='left:1631.30px;top:260.17px;font-size:14px;color:#8b8b8b;letter-spacing:-0.256px;-webkit-text-stroke:0.45px currentColor;'>Done:</span><span class='t' style='left:1861.47px;top:260.17px;font-size:14px;color:#0c095c;letter-spacing:0.168px;-webkit-text-stroke:0.45px currentColor;'>6212</span><svg style="left:1605px;top:294px" width="18" height="18" viewBox="0 0 18 18"><circle cx="9" cy="9" r="9" fill="#f0747c"/><circle cx="9" cy="9" r="4.6" fill="none" stroke="#fff" stroke-width="1.3"/><path d="M5.8 5.8 L12.2 12.2" stroke="#fff" stroke-width="1.3"/></svg><span class='t' style='left:1631.30px;top:297.17px;font-size:14px;color:#8b8b8b;letter-spacing:-0.064px;-webkit-text-stroke:0.45px currentColor;'>Cancelled:</span><span class='t' style='left:1877.38px;top:297.17px;font-size:14px;color:#0c095c;letter-spacing:0.172px;-webkit-text-stroke:0.45px currentColor;'>21</span><svg style="left:1605px;top:331px" width="18" height="18" viewBox="0 0 18 18"><circle cx="9" cy="9" r="9" fill="#9398ee"/><rect x="6" y="4.6" width="2" height="8.8" rx="0.6" fill="#fff"/><rect x="10" y="4.6" width="2" height="8.8" rx="0.6" fill="#fff"/></svg><span class='t' style='left:1631.30px;top:334.17px;font-size:14px;color:#8b8b8b;letter-spacing:-0.039px;-webkit-text-stroke:0.45px currentColor;'>Stopped:</span><span class='t' style='left:1885.33px;top:334.17px;font-size:14px;color:#0c095c;letter-spacing:0.172px;-webkit-text-stroke:0.45px currentColor;'>2</span><span class='t' style='left:1605.00px;top:371.37px;font-size:14px;color:#8b8b8b;letter-spacing:0.037px;-webkit-text-stroke:0.45px currentColor;'>Total Run Time:</span><span class='t' style='left:1802.52px;top:371.37px;font-size:14px;color:#0c095c;letter-spacing:0.096px;-webkit-text-stroke:0.45px currentColor;'>1054.74 hours</span><span class='t' style='left:1605.00px;top:408.37px;font-size:14px;color:#8b8b8b;letter-spacing:0.141px;-webkit-text-stroke:0.45px currentColor;'>Total Billed Time:</span><span class='t' style='left:1802.52px;top:408.37px;font-size:14px;color:#0c095c;letter-spacing:0.096px;-webkit-text-stroke:0.45px currentColor;'>1768.61 hours</span><svg style="left:1593px;top:935px" width="17" height="14" viewBox="0 0 17 14"><g fill="#8c8c8c"><path d="M0 0.200 L4.200 0.200 L8.600 7 L4.200 13.800 L0 13.800 L4.300 7 Z"/><path d="M7.500 0.200 L11.700 0.200 L16.100 7 L11.700 13.800 L7.500 13.800 L11.800 7 Z"/></g></svg></aside></body></html>
